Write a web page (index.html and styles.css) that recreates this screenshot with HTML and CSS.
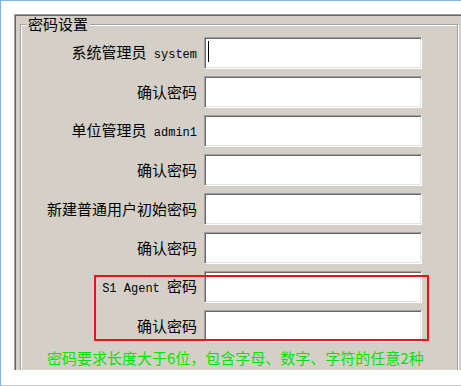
FILE: index.html
```html
<!DOCTYPE html>
<html lang="zh-CN">
<head>
    <meta charset="UTF-8">
    <title>密码设置</title>
    <link rel="stylesheet" href="styles.css">
</head>
<body>

<div class="panel">
    <fieldset class="group">
        <legend>密码设置</legend>

        <div class="row">
            <label>系统管理员<span class="en"> system</span></label>
            <span class="field">
                <input type="password">
                <span class="caret"></span>
            </span>
        </div>
        <div class="row">
            <label>确认密码</label>
            <input type="password">
        </div>
        <div class="row">
            <label>单位管理员<span class="en"> admin1</span></label>
            <input type="password">
        </div>
        <div class="row">
            <label>确认密码</label>
            <input type="password">
        </div>
        <div class="row">
            <label>新建普通用户初始密码</label>
            <input type="password">
        </div>
        <div class="row">
            <label>确认密码</label>
            <input type="password">
        </div>

        <!-- S1 Agent rows, marked with a red box -->
        <div class="highlight">
            <div class="row">
                <label><span class="en">S1 Agent </span>密码</label>
                <input type="password">
            </div>
            <div class="row">
                <label>确认密码</label>
                <input type="password">
            </div>
        </div>

        <p class="note">密码要求长度大于6位，包含字母、数字、字符的任意2种</p>
    </fieldset>
</div>

<div class="footer"></div>

</body>
</html>
```

FILE: styles.css
```css
html, body {
    overflow: hidden;
}

body {
    margin: 0;
    height: 385px;
    background-color: #fff;
    border-top: 1px solid #7fb2e8;
    border-left: 1px solid #7fb2e8;
    font-family: "Noto Sans CJK SC", "Liberation Sans", sans-serif;
    font-size: 15px;
    color: #000;
}

.panel {
    margin: 13px 0 0 13px;
    height: 354px;
    background-color: #d4d0c8;
    border-top: 1px solid #a0a0a0;
    border-left: 1px solid #a0a0a0;
    box-shadow: inset 1px 1px 0 #696969;
    padding: 1px 0 0 1px;
    overflow: hidden;
}

.group {
    margin: 0 3px 0 4px;
    padding: 0;
    height: 400px;
    border: 1px solid #a0a0a0;
    box-shadow: inset 1px 1px 0 #fff, 1px 1px 0 #fff;
}

.group legend {
    margin-left: 5px;
    padding: 0 2px;
    line-height: 16px;
    background-color: #d4d0c8;
}

.row {
    display: flex;
    align-items: center;
    gap: 7px;
    margin-bottom: 7px;
}

.group > .row:first-of-type {
    margin-top: 5px;
}

.row label {
    width: 176px;
    text-align: right;
    white-space: pre;
    line-height: 18px;
}

.en {
    font-family: "Liberation Mono", monospace;
    font-size: 12px;
}

.row input {
    box-sizing: border-box;
    display: block;
    width: 218px;
    height: 32px;
    margin: 0;
    padding: 0 3px;
    background-color: #fff;
    border: 1px solid;
    border-color: #a0a0a0 #fff #fff #a0a0a0;
    box-shadow: inset 1px 1px 0 #696969, inset -1px -1px 0 #e3e3e3;
    outline: none;
    font-size: 15px;
}

/* text cursor in the first box */
.field {
    position: relative;
}

.caret {
    position: absolute;
    left: 4px;
    top: 4px;
    width: 1px;
    height: 21px;
    background-color: #000;
}

.highlight {
    position: relative;
}

.highlight::after {
    content: "";
    position: absolute;
    top: 4px;
    bottom: 1px;
    left: 73px;
    right: 28px;
    border: 2px solid #e8141c;
    pointer-events: none;
}

.note {
    margin: 4px 0 0 26px;
    line-height: 18px;
    color: #00e400;
    white-space: nowrap;
}

.footer {
    margin-top: 15px;
    border-top: 1px solid #c8c8c8;
}
```
